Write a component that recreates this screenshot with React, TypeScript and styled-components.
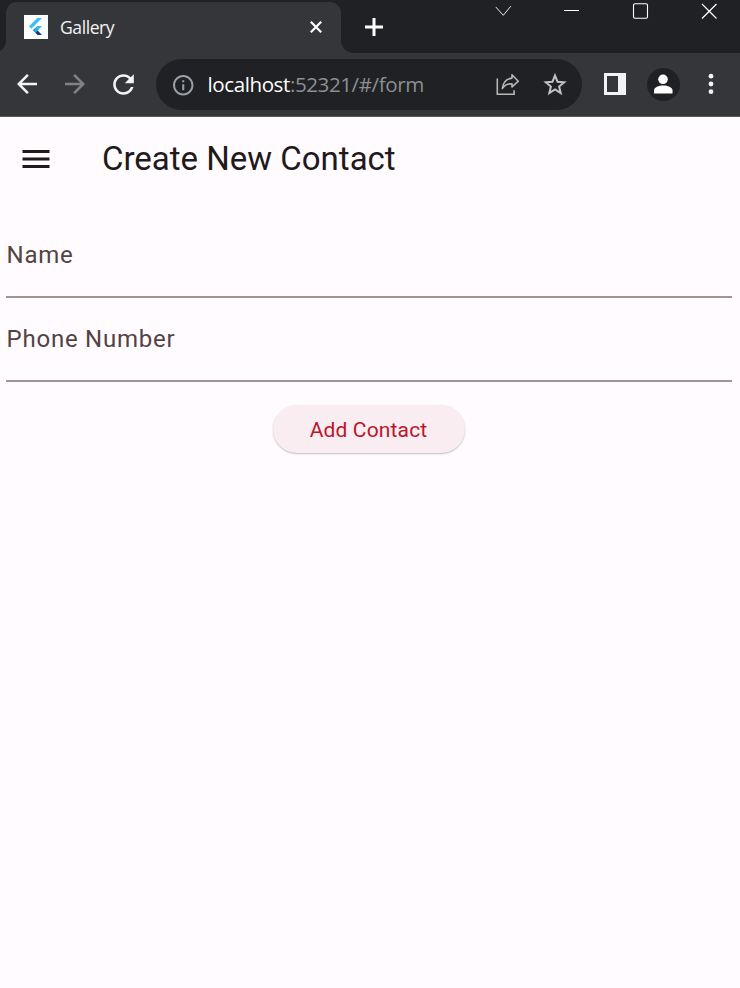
import React from "react";
import styled, { createGlobalStyle } from "styled-components";

const GlobalStyle = createGlobalStyle`
  * { box-sizing: border-box; }
  body { margin: 0; background: #fffbff; }
  button { border: 0; padding: 0; background: none; font: inherit; color: inherit; }
  svg { display: block; flex: none; }
`;

const Window = styled.div`
  display: flex;
  flex-direction: column;
  width: 740px;
  height: 988px;
  overflow: hidden;
  background: #fffbff;
`;

const TabStrip = styled.div`
  display: flex;
  height: 53px;
  padding: 2px 0 0 6px;
  background: #202124;
`;

const Tab = styled.div`
  position: relative;
  display: flex;
  align-items: center;
  width: 335px;
  height: 51px;
  padding: 0 17px 2px 18px;
  border-radius: 11px 11px 0 0;
  background: #35363a;
  color: #f1f3f4;

  &::before,
  &::after {
    content: "";
    position: absolute;
    bottom: 0;
    width: 12px;
    height: 12px;
  }
  &::before {
    left: -12px;
    background: radial-gradient(circle at 0 0, transparent 11.5px, #35363a 12.2px);
  }
  &::after {
    right: -12px;
    background: radial-gradient(circle at 100% 0, transparent 11.5px, #35363a 12.2px);
  }
`;

const TabTitle = styled.span`
  flex: 1;
  margin-left: 12px;
  font: 17.6px/24px "Open Sans", "Noto Sans", sans-serif;
  letter-spacing: -0.45px;
`;

const NewTabButton = styled.button`
  display: grid;
  place-items: center;
  width: 40px;
  height: 50px;
  margin-left: 12px;
`;

const WindowControls = styled.div`
  display: flex;
  margin: -2px 0 0 auto;
`;

const WindowControl = styled.button`
  display: grid;
  justify-items: center;
  width: 69px;
  height: 22px;

  &:first-child { width: 68px; }
  &:last-child { width: 65px; padding-left: 2px; }
`;

const Toolbar = styled.div`
  display: flex;
  align-items: center;
  height: 64px;
  padding: 0 0 1px 3px;
  border-bottom: 1px solid #5a5a5d;
  background: #35363a;
`;

const ToolButton = styled.button<{ $width?: number; $dim?: boolean }>`
  display: grid;
  place-items: center;
  width: ${({ $width }) => $width ?? 48}px;
  height: 48px;
  color: ${({ $dim }) => ($dim ? "#818285" : "#f1f3f4")};
`;

const AddressBar = styled.div`
  display: flex;
  align-items: center;
  width: 426px;
  height: 51px;
  margin: 0 9px;
  padding: 0 3px 0 15px;
  border-radius: 26px;
  background: #202124;
  color: #9aa0a6;
`;

const SiteInfo = styled.span`
  padding-top: 2px;
`;

const Address = styled.span`
  flex: 1;
  margin-left: 12px;
  font: 20.6px/28px "Open Sans", "Noto Sans", sans-serif;
  letter-spacing: -0.43px;
  color: #8c8f92;
`;

const Host = styled.span`
  color: #fff;
`;

const Avatar = styled.span`
  display: grid;
  place-items: center;
  width: 33px;
  height: 33px;
  border-radius: 50%;
  background: #202124;
  color: #fff;
`;

const AppBar = styled.header`
  display: flex;
  align-items: center;
  height: 84px;
  padding-left: 18px;
  color: #201a1a;
`;

const AppTitle = styled.h1`
  margin: 0 0 0 48px;
  font: 400 33px/42px Roboto, sans-serif;
`;

const Form = styled.form`
  display: flex;
  flex-direction: column;
  padding: 13px 8px 0 6px;
`;

const Field = styled.label`
  height: 84px;
  padding: 26px 0 0 0.6px;
  border-bottom: 2px solid #a39393;
  color: #534343;
  font: 24px/30px Roboto, sans-serif;
  letter-spacing: 0.75px;
`;

const SubmitButton = styled.button`
  align-self: center;
  width: 192px;
  height: 48px;
  margin-top: 23px;
  padding: 1px 1px 0 0;
  border-radius: 24px;
  background: #f9edf1;
  color: #bb152c;
  font: 21px/48px Roboto, sans-serif;
  letter-spacing: 0.15px;
  box-shadow: 0 1px 2px rgba(0, 0, 0, 0.2), 0 1px 1px rgba(0, 0, 0, 0.06);
`;

const FlutterLogo = () => (
  <svg width="24" height="24" viewBox="0 0 24 24">
    <path fill="#fff" d="M0 0h24v24H0z" />
    <path fill="#42bcf5" d="M13.300 3.100H18L7.400 13.700 5 11.300z" />
    <path fill="#36b5f2" d="M13.300 11H18L13.600 15.400l-2.400 2.200-2.400-2.300z" />
    <path fill="#073c91" d="m11.200 17.600 2.400-2.200 4.400 4.700h-4.500z" />
    <path fill="#20a3e8" d="m11.200 13 2.400 2.300-2.400 2.300-2.400-2.300z" />
  </svg>
);

const MaterialIcon = ({ size, d }: { size: number; d: string }) => (
  <svg width={size} height={size} viewBox="0 0 24 24" fill="currentColor">
    <path d={d} />
  </svg>
);

const LineIcon = ({ width = 22, height = 22, d, stroke = 1.2 }: {
  width?: number; height?: number; d: string; stroke?: number;
}) => (
  <svg width={width} height={height} viewBox={`0 0 ${width} ${height}`} fill="none" stroke="#fff" strokeWidth={stroke}>
    <path d={d} />
  </svg>
);

const ShareIcon = () => (
  <svg width="26" height="24" viewBox="-2 0 26 24" fill="none" stroke="#b8b8b8" strokeWidth="1.6">
    <path d="M1.300 6.500v15.800h16.800v-4" />
    <path d="M16 2.800 22.300 9.200 16 15v-3.300c-4.500-.2-7.300 1.400-9.700 4.800.7-5.800 3.800-9.700 9.700-10.400z" strokeLinejoin="round" />
  </svg>
);

const SidePanelIcon = () => (
  <svg width="22" height="22" viewBox="0 0 22 22">
    <path fill="#f1f3f4" fillRule="evenodd" d="M0 0h22v22H0zM3 3v16h11V3z" />
  </svg>
);

const MoreIcon = () => (
  <svg width="6" height="22" viewBox="0 0 6 22" fill="#f1f3f4">
    <circle cx="3" cy="3.200" r="2.400" />
    <circle cx="3" cy="11" r="2.400" />
    <circle cx="3" cy="18.700" r="2.400" />
  </svg>
);

const MenuIcon = () => (
  <svg width="36" height="36" viewBox="0 0 36 36" fill="#201a1a">
    <path d="M4.500 9h27v3h-27zM4.500 16.500h27v3h-27zM4.500 24h27v3h-27z" />
  </svg>
);

const fields = ["Name", "Phone Number"];

export default function App() {
  return (
    <Window>
      <GlobalStyle />
      <TabStrip>
        <Tab>
          <FlutterLogo />
          <TabTitle>Gallery</TabTitle>
          <LineIcon width={16} height={16} stroke={2.200} d="M2.800 2.800 13.200 13.200M13.200 2.800 2.800 13.200" />
        </Tab>
        <NewTabButton aria-label="New tab">
          <LineIcon width={21} height={20} stroke={3} d="M2 10h18M11 1v18" />
        </NewTabButton>
        <WindowControls>
          <WindowControl aria-label="Search tabs"><LineIcon d="M3.800 7 11.300 15.300 18.800 6.200" stroke={0.9} /></WindowControl>
          <WindowControl aria-label="Minimize"><LineIcon d="M3 10.500h15" stroke={1} /></WindowControl>
          <WindowControl aria-label="Maximize"><LineIcon d="M5 3.800h11a1.500 1.500 0 0 1 1.500 1.500v11.400a1.500 1.500 0 0 1-1.500 1.500H5a1.500 1.500 0 0 1-1.500-1.500V5.300A1.500 1.500 0 0 1 5 3.800z" stroke={1.100} /></WindowControl>
          <WindowControl aria-label="Close"><LineIcon d="M4 4 18.500 18.500M18.500 4 4 18.500" /></WindowControl>
        </WindowControls>
      </TabStrip>
      <Toolbar>
        <ToolButton aria-label="Back">
          <MaterialIcon size={30} d="M20 11H7.830l5.590-5.590L12 4l-8 8 8 8 1.410-1.410L7.830 13H20z" />
        </ToolButton>
        <ToolButton aria-label="Forward" $dim>
          <MaterialIcon size={30} d="m12 4-1.410 1.410L16.170 11H4v2h12.170l-5.580 5.590L12 20l8-8z" />
        </ToolButton>
        <ToolButton aria-label="Reload">
          <MaterialIcon size={31} d="M17.650 6.350C16.200 4.900 14.210 4 12 4c-4.420 0-7.990 3.580-7.990 8s3.570 8 7.990 8c3.730 0 6.840-2.550 7.730-6h-2.080c-.82 2.330-3.040 4-5.650 4-3.310 0-6-2.690-6-6s2.690-6 6-6c1.660 0 3.140.69 4.220 1.780L13 11h7V4z" />
        </ToolButton>
        <AddressBar>
          <SiteInfo><MaterialIcon size={24.500} d="M11 7h2v2h-2zm0 4h2v6h-2zm1-9C6.480 2 2 6.480 2 12s4.480 10 10 10 10-4.480 10-10S17.520 2 12 2m0 18c-4.410 0-8-3.590-8-8s3.590-8 8-8 8 3.590 8 8-3.590 8-8 8" /></SiteInfo>
          <Address><Host>localhost</Host>:52321/#/form</Address>
          <ToolButton aria-label="Share"><ShareIcon /></ToolButton>
          <ToolButton aria-label="Bookmark">
            <svg width="24" height="24" viewBox="0 0 24 24" fill="none" stroke="#c2c2c3" strokeWidth="2">
              <path d="m12 3.500 2.500 6.200 6.700.5-5.100 4.300 1.600 6.500-5.700-3.500L6.300 21l1.600-6.500-5.100-4.300 6.700-.5z" />
            </svg>
          </ToolButton>
        </AddressBar>
        <ToolButton aria-label="Side panel"><SidePanelIcon /></ToolButton>
        <ToolButton aria-label="Profile" $width={49}>
          <Avatar>
            <svg width="19" height="20" viewBox="0 0 19 20" fill="currentColor">
              <circle cx="9" cy="5.300" r="4.800" />
              <path d="M0 19.500v-3.200c0-3 5-4.800 9.200-4.800s9.300 1.800 9.300 4.800v3.200z" />
            </svg>
          </Avatar>
        </ToolButton>
        <ToolButton aria-label="More" $width={46}><MoreIcon /></ToolButton>
      </Toolbar>
      <AppBar>
        <MenuIcon />
        <AppTitle>Create New Contact</AppTitle>
      </AppBar>
      <Form>
        {fields.map((name) => <Field key={name}>{name}</Field>)}
        <SubmitButton type="button">Add Contact</SubmitButton>
      </Form>
    </Window>
  );
}
